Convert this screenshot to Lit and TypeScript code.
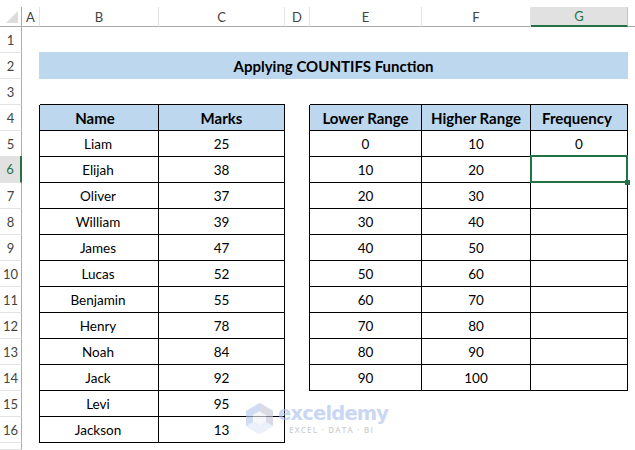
import { LitElement, html, css } from "lit";
import { customElement } from "lit/decorators.js";

const names: [string, number][] = [
  ["Liam", 25], ["Elijah", 38], ["Oliver", 37], ["William", 39], ["James", 47], ["Lucas", 52],
  ["Benjamin", 55], ["Henry", 78], ["Noah", 84], ["Jack", 92], ["Levi", 95], ["Jackson", 13],
];
const cols = ["A", "B", "C", "D", "E", "F", "G"];

@customElement("app-root")
export class AppRoot extends LitElement {
  static styles = css`
    :host { display: block; width: 635px; height: 450px; overflow: hidden; background: #fff; position: relative;
      font-family: "Lato", "Open Sans", sans-serif; font-size: 13.5px; color: #000; }
    .grid { display: grid; grid-template-columns: 22px 18px 119px 126px 25px 112px 109px 97px 7px;
      grid-template-rows: 7px 20px repeat(16, 26px) 7px; width: 635px; height: 450px; }
    .c { display: flex; align-items: center; justify-content: center; min-width: 0; box-sizing: border-box; white-space: nowrap; }
    .strip { grid-column: 1 / -1; }
    .corner { border-right: 1px solid #ababab; border-bottom: 1px solid #ababab; position: relative; }
    .tri { width: 0; height: 0; border-left: 12px solid transparent; border-bottom: 12px solid #dcdcdc; position: absolute; right: 3px; bottom: 3px; }
    .ch { border-right: 1px solid #e3e3e3; border-bottom: 1px solid #ababab; color: #444; font-size: 13px; }
    .ch.last { border-right: 0; }
    .ch.sel { background: #e1e1e1; color: #217346; border-bottom: 2px solid #217346; border-right: 1px solid #c6c6c6; }
    .rh { border-right: 1px solid #ababab; border-bottom: 1px solid #e3e3e3; color: #444; font-size: 13px; }
    .rh.sel { background: #e1e1e1; color: #217346; border-right: 2px solid #217346; margin-top: -1px; }
    .rb { border-right: 1px solid #000; border-bottom: 1px solid #000; }
    .bb { border-bottom: 1px solid #000; }
    .br { border-right: 1px solid #000; }
    .h { background: #bdd7ee; font-weight: 700; font-size: 15px; }
    .title { grid-column: 2 / 9; background: #bdd7ee; font-weight: 700; font-size: 15px; margin-top: -1px; margin-left: 17px; }
    .sel-cell { position: relative; }
    .frame { position: absolute; left: -1px; top: -2px; right: -1px; bottom: -1px; border: 2px solid #217346; }
    .handle { position: absolute; right: -3px; bottom: -3px; width: 5px; height: 5px; background: #217346; }
    .nudge { padding-right: 8px; }
    .nudge2 { padding-right: 4px; }
    .nm { padding-right: 2px; }
    .wm { position: absolute; left: 246px; top: 403px; display: flex; gap: 5px; opacity: .62; pointer-events: none; }
    .wm svg { display: block; }
    .wm-text { display: flex; flex-direction: column; }
    .wm-big { font-family: "DejaVu Sans", sans-serif; font-weight: 700; font-size: 19.5px; line-height: 22px; color: #a9bff0; letter-spacing: -.8px; }
    .wm-small { font-family: "Open Sans", sans-serif; font-size: 8px; line-height: 10px; color: #b5b5b5; letter-spacing: 1.2px; font-weight: 600; white-space: nowrap; margin-left: 11px; }
  `;

  private row(r: number) {
    const n = r >= 5 && r <= 16 ? names[r - 5] : null;
    const isHead = r === 4;
    const rangeIdx = r - 5;
    const inRange = r >= 5 && r <= 14;
    const lo = inRange ? rangeIdx * 10 : "";
    const hi = inRange ? (rangeIdx + 1) * 10 : "";
    const inB = r >= 4 && r <= 16;
    const inE = r >= 4 && r <= 14;
    if (r === 2) {
      return html`<div class="c rh">2</div><div class="c title">Applying COUNTIFS Function</div><div class="c"></div>`;
    }
    return html`
      <div class="c rh ${r === 6 ? "sel" : ""}">${r}</div>
      <div class="c ${inB ? "br" : ""}"></div>
      <div class="c ${r === 3 ? "bb" : ""} ${inB ? "rb" : ""} ${isHead ? "h nudge" : "nm"}">${isHead ? "Name" : n ? n[0] : ""}</div>
      <div class="c ${r === 3 ? "bb" : ""} ${inB ? "rb" : ""} ${isHead ? "h" : ""}">${isHead ? "Marks" : n ? n[1] : ""}</div>
      <div class="c ${inE ? "br" : ""}"></div>
      <div class="c ${r === 3 ? "bb" : ""} ${inE ? "rb" : ""} ${isHead ? "h" : ""}">${isHead ? "Lower Range" : lo}</div>
      <div class="c ${r === 3 ? "bb" : ""} ${inE ? "rb" : ""} ${isHead ? "h" : ""}">${isHead ? "Higher Range" : hi}</div>
      <div class="c ${r === 3 ? "bb" : ""} ${inE ? "rb" : ""} ${isHead ? "h nudge2" : ""} ${r === 6 ? "sel-cell" : ""}">
        ${isHead ? "Frequency" : r === 5 ? "0" : ""}
        ${r === 6 ? html`<div class="frame"></div><div class="handle"></div>` : ""}
      </div>
      <div class="c"></div>`;
  }

  render() {
    return html`
      <div class="grid">
        <div class="strip"></div>
        <div class="c corner"><div class="tri"></div></div>
        ${cols.map((c) => html`<div class="c ch ${c === "G" ? "sel" : ""}">${c}</div>`)}
        <div class="c ch last"></div>
        ${Array.from({ length: 16 }, (_, i) => this.row(i + 1))}
        <div class="c rh"></div>
      </div>
      <div class="wm">
        <svg width="27" height="31" viewBox="0 0 27 31">
          <polygon points="13.5,0 27,8 27,23 13.5,31 0,23 0,8" fill="#b4c8ee"/>
          <polygon points="13.5,8 20,12 20,19 13.5,23 7,19 7,12" fill="#eef1f7"/>
          <polygon points="13.5,0 27,8 27,23 20,19 20,12 13.5,8" fill="#c4c6d4"/>
          <polygon points="0,23 13.5,31 27,23 20,19 13.5,23 7,19" fill="#dfe8f9"/>
        </svg>
        <div class="wm-text">
          <div class="wm-big">exceldemy</div>
          <div class="wm-small">EXCEL · DATA · BI</div>
        </div>
      </div>`;
  }
}
